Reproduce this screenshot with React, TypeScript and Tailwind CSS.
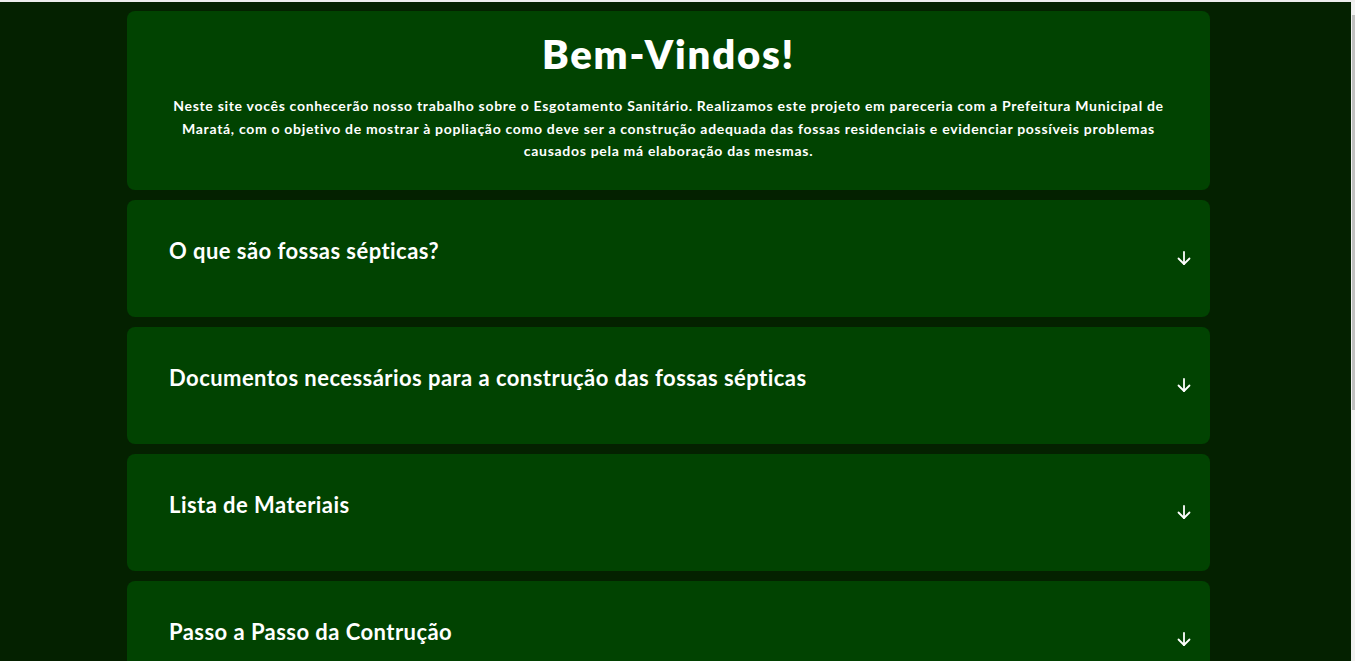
import React from "react";

function ArrowDown() {
  return (
    <svg width="16" height="16" viewBox="0 0 16 16" fill="none" stroke="white" strokeWidth="1.8" strokeLinecap="round" strokeLinejoin="round">
      <path d="M8 2v12" />
      <path d="M2.5 8.5L8 14l5.5-5.5" />
    </svg>
  );
}

function Item({ title }: { title: string }) {
  return (
    <div className="bg-[#014301] rounded-[8px] h-[117px] flex items-start justify-between pl-[42px] pr-[18px] pt-[36px]">
      <h2 className="text-white font-bold text-[22px] leading-[30px] tracking-[0.45px]">{title}</h2>
      <div className="mt-[14px]">
        <ArrowDown />
      </div>
    </div>
  );
}

export default function App() {
  return (
    <div className="h-[661px] w-[1355px] overflow-hidden flex flex-col bg-[#042100]" style={{ fontFamily: "Lato, 'Noto Sans', sans-serif" }}>
      <div className="h-[2px] bg-[#ededed] shrink-0" />
      <div className="flex flex-1 min-h-0">
        <div className="flex-1 min-w-0">
          <div className="ml-[127px] w-[1083px] pt-[9px] flex flex-col gap-[10px]">
            <div className="bg-[#014301] rounded-[8px] h-[179px] flex flex-col items-center pt-[18px] px-[30px]">
              <h1 className="text-white font-extrabold text-[40px] leading-[50px] tracking-[1.8px]">Bem-Vindos!</h1>
              <p className="text-white font-bold text-[14px] leading-[22.5px] tracking-[0.7px] text-center mt-[16px]">
                Neste site vocês conhecerão nosso trabalho sobre o Esgotamento Sanitário. Realizamos este projeto em pareceria com a Prefeitura Municipal de
                <br />
                Maratá, com o objetivo de mostrar à popliação como deve ser a construção adequada das fossas residenciais e evidenciar possíveis problemas
                <br />
                causados pela má elaboração das mesmas.
              </p>
            </div>
            <Item title="O que são fossas sépticas?" />
            <Item title="Documentos necessários para a construção das fossas sépticas" />
            <Item title="Lista de Materiais" />
            <Item title="Passo a Passo da Contrução" />
          </div>
        </div>
        <div className="w-[4px] bg-[#f1f1f1] shrink-0 flex justify-end">
          <div className="w-[3px] h-[395px] mt-[13px] bg-[#c1c1c1]" />
        </div>
      </div>
    </div>
  );
}
